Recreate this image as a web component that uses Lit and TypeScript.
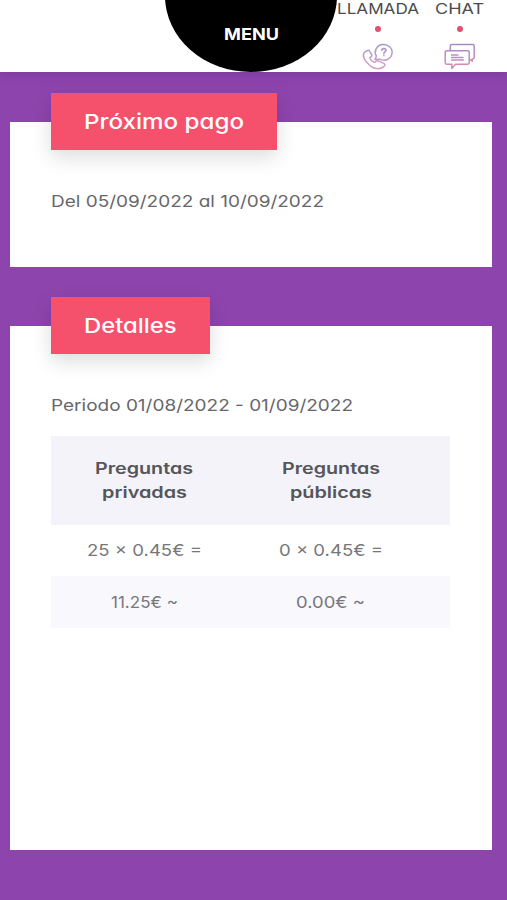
import { LitElement, html, css, svg } from "lit";
import { customElement, property } from "lit/decorators.js";

// A single line of text stretched to a set width, in a 24px line box.
@customElement("wide-text")
class WideText extends LitElement {
  @property() text = "";
  @property({ type: Number }) width = 100;

  static styles = css`
    :host { display: block; height: 24px; line-height: 0; }
    svg { display: block; overflow: visible; }
    text { fill: currentColor; font-feature-settings: "cv11"; }
  `;

  render() {
    return html`<svg width=${this.width} height="24">
      ${svg`<text x="0" y="18" textLength=${this.width} lengthAdjust="spacingAndGlyphs">${this.text}</text>`}
    </svg>`;
  }
}

@customElement("app-root")
class AppRoot extends LitElement {
  static styles = css`
    :host {
      display: block;
      width: 507px;
      height: 900px;
      overflow: hidden;
      background: #8e44ad;
      color: #67676b;
      font-family: Inter, "Open Sans", sans-serif;
      font-size: 16.5px;
    }
    * { box-sizing: border-box; }
    header {
      display: flex;
      height: 71.5px;
      padding-left: 165px;
      background: #fff;
      box-shadow: 0 1px 12px rgba(40, 40, 100, 0.28);
      position: relative;
    }
    .menu {
      width: 172px;
      height: 152px;
      margin-top: -80.5px;
      flex: none;
      display: flex;
      justify-content: center;
      padding-top: 102.5px;
      border-radius: 50%;
      background: #000;
      color: #fff;
      font-size: 16px;
      font-weight: 700;
    }
    .action {
      display: flex;
      flex-direction: column;
      align-items: center;
      flex: none;
      margin-top: -4.5px;
      color: #4c4c4c;
      font-size: 15px;
    }
    .chat { margin-left: 16px; }
    .dot {
      width: 6px;
      height: 6px;
      margin-top: 6.5px;
      border-radius: 50%;
      background: #e0506f;
    }
    .icon { display: block; margin-top: 11px; }
    .card {
      display: flow-root;
      width: 482px;
      margin-left: 10px;
      padding-left: 41px;
      background: #fff;
    }
    .next { height: 145.5px; margin-top: 50px; }
    .details { height: 524.5px; margin-top: 58.5px; }
    .tag {
      display: flex;
      width: 226px;
      height: 57px;
      margin-top: -28.5px;
      padding: 18px 0 0 33px;
      background: #f5516c;
      box-shadow: 0 7px 20px rgba(0, 0, 0, 0.14);
      color: #fff;
      font-size: 20.5px;
      font-weight: 500;
    }
    .short { width: 159px; }
    .line { margin-top: 39px; }
    .table { width: 399px; margin-top: 18.5px; }
    .row {
      display: grid;
      grid-template-columns: 186px 187px;
      align-content: center;
      height: 51.5px;
      color: #77777b;
    }
    .row > div { display: flex; flex-direction: column; align-items: center; }
    .head {
      height: 89px;
      background: #f3f3f9;
      color: #55555a;
      font-weight: 600;
    }
    .head wide-text { font-size: 16px; }
    .tint { background: #f9f8fd; }
  `;

  render() {
    return html`
      <header>
        <div class="menu"><wide-text text="MENU" .width=${55}></wide-text></div>
        <div class="action">
          <wide-text text="LLAMADA" .width=${82}></wide-text>
          <div class="dot"></div>
          <svg class="icon" width="32" height="27" viewBox="0 0 32 27" fill="none" stroke="url(#g1)" stroke-width="1.5" stroke-linejoin="round" stroke-linecap="round">
            <defs><linearGradient id="g1" gradientUnits="userSpaceOnUse" x1="0" y1="0" x2="0" y2="27">
              <stop offset="0" stop-color="#a294cf"/><stop offset="1" stop-color="#dda3c2"/>
            </linearGradient></defs>
            <path d="M13 16.6 L14.4 13.2 A8.4 7.9 0 1 1 17.6 16.2 Z"/>
            <path d="M19.8 7.3 C19.8 4.9 24.2 5 24 7.3 C23.8 8.9 22 8.7 21.9 10.4 M21.9 12.4 V12.5" stroke-width="1.7"/>
            <path d="M3 8.8 L5.1 7.6 C6.1 7 7 7.3 7.5 8.2 L9.6 11.6 C10.2 12.6 9.9 13.3 9 13.9 L7.8 14.7 C7.3 15.5 11.2 19.6 12.6 19.3 L14.5 18.1 C15.3 17.6 16 17.6 16.8 18.1 L22.2 20.6 C23.1 21.2 23.2 21.9 22.6 22.7 C19 26.9 13 26.6 8.2 22.8 C1.8 17.4 -.4 11.8 3 8.8 Z"/>
          </svg>
        </div>
        <div class="action chat">
          <wide-text text="CHAT" .width=${49}></wide-text>
          <div class="dot"></div>
          <svg class="icon" width="32" height="27" viewBox="0 0 32 27" fill="none" stroke="url(#g2)" stroke-width="1.5" stroke-linejoin="round" stroke-linecap="round">
            <defs><linearGradient id="g2" gradientUnits="userSpaceOnUse" x1="0" y1="0" x2="0" y2="27">
              <stop offset="0" stop-color="#9c8fcd"/><stop offset="1" stop-color="#e08cab"/>
            </linearGradient></defs>
            <path d="M6.3 7.6 V3.2 Q6.3 1.6 8 1.6 H28.5 Q30.2 1.6 30.2 3.2 V14.4 Q30.2 16 28.5 16 H28.2 V18.2 L25.4 16"/>
            <path d="M3 7.8 H23.4 Q25.2 7.8 25.2 9.5 V19.6 Q25.2 21.3 23.4 21.3 H11.5 L7.8 25.4 V21.3 H3 Q1.2 21.3 1.2 19.6 V9.5 Q1.2 7.8 3 7.8 Z"/>
            <path d="M7.5 12 H14 M7.5 14.5 H19 M7.5 17 H19.5" stroke-width="1.3"/>
          </svg>
        </div>
      </header>

      <section class="card next">
        <div class="tag"><wide-text text="Próximo pago" .width=${160}></wide-text></div>
        <wide-text class="line" text="Del 05/09/2022 al 10/09/2022" .width=${273}></wide-text>
      </section>

      <section class="card details">
        <div class="tag short"><wide-text text="Detalles" .width=${92.5}></wide-text></div>
        <wide-text class="line" text="Periodo 01/08/2022 - 01/09/2022" .width=${302}></wide-text>
        <div class="table">
          <div class="row head">
            <div>
              <wide-text text="Preguntas" .width=${98}></wide-text>
              <wide-text text="privadas" .width=${85}></wide-text>
            </div>
            <div>
              <wide-text text="Preguntas" .width=${98}></wide-text>
              <wide-text text="públicas" .width=${82}></wide-text>
            </div>
          </div>
          <div class="row">
            <div><wide-text text="25 × 0.45€ =" .width=${115}></wide-text></div>
            <div><wide-text text="0 × 0.45€ =" .width=${104}></wide-text></div>
          </div>
          <div class="row tint">
            <div><wide-text text="11.25€ ~" .width=${67}></wide-text></div>
            <div><wide-text text="0.00€ ~" .width=${69}></wide-text></div>
          </div>
        </div>
      </section>
    `;
  }
}
